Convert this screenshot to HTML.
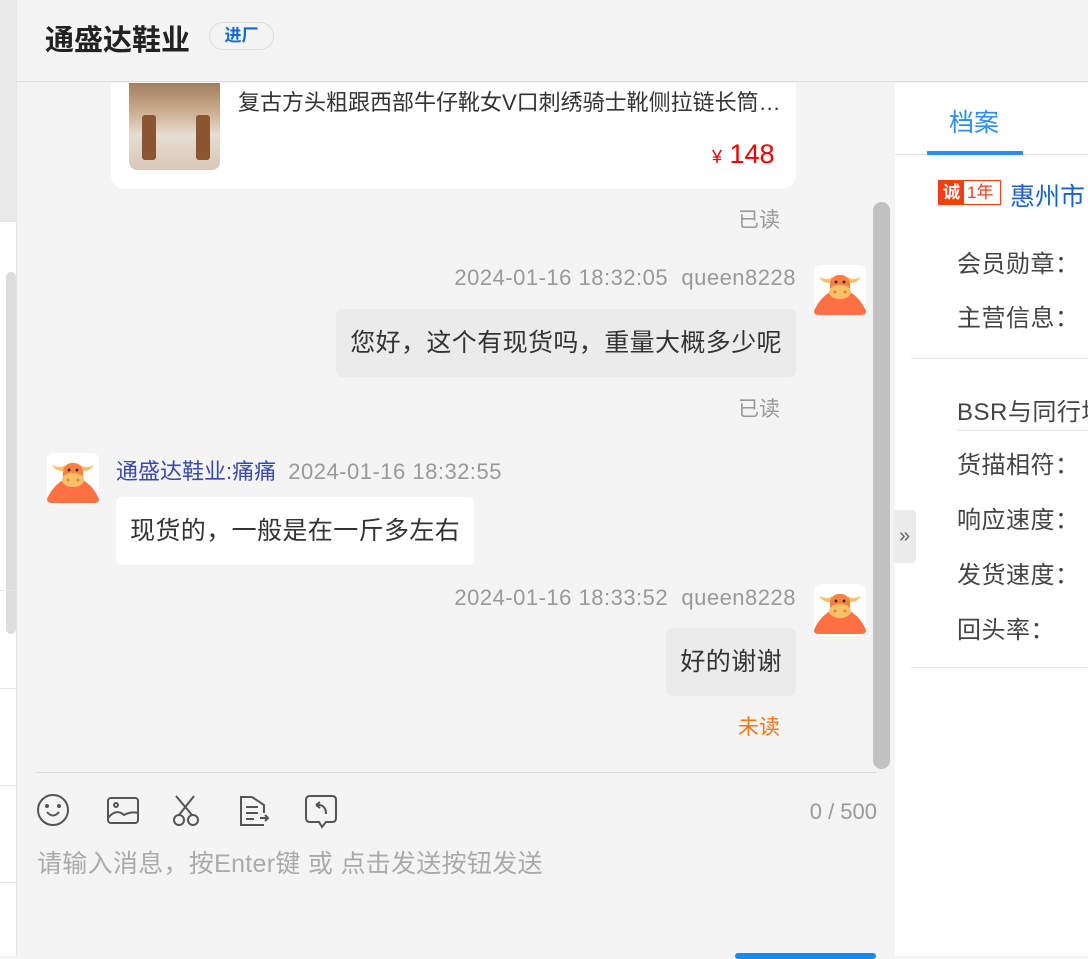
<!DOCTYPE html>
<html><head><meta charset="utf-8"><style>
*{margin:0;padding:0;box-sizing:border-box}
body{width:1088px;height:956px;overflow:hidden;background:#f4f4f4;font-family:"Liberation Sans","Noto Sans CJK SC",sans-serif;position:relative}
.a{position:absolute;white-space:nowrap}
.ts{font-size:22px;color:#999;letter-spacing:0.5px}
.bub{position:absolute;background:#ebebeb;border-radius:6px;font-size:25px;letter-spacing:0.4px;color:#333;padding:0 14px;line-height:68px}
.rd{font-size:21px;color:#999}
.lbl{font-size:24px;letter-spacing:0.5px;color:#444}
</style></head><body>
<!-- left strip -->
<div class="a" style="left:0;top:0;width:17px;height:222px;background:#e8e8e8"></div>
<div class="a" style="left:0;top:222px;width:17px;height:734px;background:#fff;border-right:1px solid #e4e4e4"></div>
<div class="a" style="left:6px;top:272px;width:10px;height:362px;background:#ddd;border-radius:5px"></div>
<div class="a" style="left:0;top:590px;width:17px;height:1px;background:#e6e6e6"></div>
<div class="a" style="left:0;top:688px;width:17px;height:1px;background:#e6e6e6"></div>
<div class="a" style="left:0;top:785px;width:17px;height:1px;background:#e6e6e6"></div>
<div class="a" style="left:0;top:882px;width:17px;height:1px;background:#e6e6e6"></div>
<!-- header -->
<div class="a" style="left:17px;top:0;width:1071px;height:82px;background:#f4f4f4;border-bottom:1px solid #ddd"></div>
<div class="a" style="left:45px;top:17px;font-size:29px;font-weight:bold;color:#222">通盛达鞋业</div>
<div class="a" style="left:209px;top:22px;width:65px;height:28px;border:1px solid #ddd;border-radius:14px;font-size:17px;color:#1768d0;font-weight:bold;text-align:center;line-height:26px">进厂</div>
<!-- product card -->
<div class="a" style="left:111px;top:83px;width:685px;height:106px;background:#fff;border-radius:0 0 14px 14px"></div>
<div class="a" style="left:129px;top:83px;width:91px;height:87px;border-radius:0 0 8px 8px;background:linear-gradient(180deg,#a08060 0%,#c9a88a 30%,#e6ddd2 60%,#d8c8b8 100%)"></div>
<div class="a" style="left:142px;top:115px;width:14px;height:45px;background:#8a5530;border-radius:3px"></div>
<div class="a" style="left:196px;top:115px;width:14px;height:45px;background:#8a5530;border-radius:3px"></div>
<div class="a" style="left:238px;top:85px;font-size:22px;color:#333">复古方头粗跟西部牛仔靴女V口刺绣骑士靴侧拉链长筒…</div>
<div class="a" style="left:712px;top:139px;color:#e00;font-size:27px"><span style="font-size:18px">¥</span> 148</div>
<div class="a rd" style="left:738px;top:204px">已读</div>
<!-- msg1 -->
<div class="a ts" style="right:292px;top:265px">2024-01-16 18:32:05&nbsp;&nbsp;queen8228</div>
<div class="bub" style="right:292px;top:309px;height:68px">您好，这个有现货吗，重量大概多少呢</div>
<div class="a rd" style="left:738px;top:393px">已读</div>
<!-- msg2 -->
<div class="a" style="left:116px;top:454px;font-size:22px;color:#3a4aa8">通盛达鞋业:痛痛 <span style="color:#999;margin-left:6px;letter-spacing:0.5px">2024-01-16 18:32:55</span></div>
<div class="bub" style="left:116px;top:497px;height:68px;background:#fff">现货的，一般是在一斤多左右</div>
<!-- msg3 -->
<div class="a ts" style="right:292px;top:585px">2024-01-16 18:33:52&nbsp;&nbsp;queen8228</div>
<div class="bub" style="right:292px;top:628px;height:68px">好的谢谢</div>
<div class="a rd" style="left:738px;top:711px;color:#f07818">未读</div>
<!-- avatars -->
<svg width="0" height="0" style="position:absolute"><defs><g id="av">
<rect width="52" height="52" rx="7" fill="#fff"/>
<path d="M0 46 Q6 32 18 26 L34 26 Q46 32 52 46 Q52 50 47 50 L5 50 Q0 50 0 46Z" fill="#ff7043"/>
<path d="M5 12 Q14 16 18 12 L18 18 Q9 19 5 12Z M47 12 Q38 16 34 12 L34 18 Q43 19 47 12Z" fill="#f9c06a"/>
<rect x="16" y="10" width="20" height="22" rx="9" fill="#ff8040"/>
<ellipse cx="26" cy="27" rx="11" ry="7" fill="#f9c06a"/>
<circle cx="22" cy="17" r="1.5" fill="#333"/><circle cx="30" cy="17" r="1.5" fill="#333"/>
<circle cx="21" cy="27" r="1.5" fill="#f08030"/><circle cx="31" cy="27" r="1.5" fill="#f08030"/>
</g></defs></svg>
<svg class="a" style="left:814px;top:265px" width="52" height="52"><use href="#av"/></svg>
<svg class="a" style="left:47px;top:453px" width="52" height="52"><use href="#av"/></svg>
<svg class="a" style="left:814px;top:584px" width="52" height="52"><use href="#av"/></svg>
<!-- scrollbar -->
<div class="a" style="left:873px;top:202px;width:17px;height:567px;background:#c1c1c1;border-radius:9px"></div>
<!-- input area -->
<div class="a" style="left:36px;top:772px;width:841px;height:1px;background:#ddd"></div>
<svg class="a" style="left:36px;top:793px" width="310" height="36" fill="none" stroke="#555" stroke-width="2">
<circle cx="17" cy="17" r="15"/><path d="M11 19 Q17 26 23 19"/><circle cx="11" cy="13" r="1" fill="#555"/><circle cx="23" cy="13" r="1" fill="#555"/>
<rect x="72" y="5" width="30" height="25" rx="3"/><circle cx="80" cy="12" r="2"/><path d="M72 25 Q80 15 88 22 Q95 18 102 20"/>
<path d="M140 3 L156 22 M158 3 L143 22"/><circle cx="143" cy="27" r="5"/><circle cx="157" cy="27" r="5"/>
<path d="M216 4 L205 4 L205 32 L228 32 M216 4 L228 12 L228 20 M210 14 L222 14 M210 20 L222 20 M210 26 L218 26 M224 25 L232 25 M229 22 L232 25 L229 28"/>
<path d="M274 3 L296 3 Q300 3 300 7 L300 25 Q300 29 296 29 L290 29 L286 34 L283 29 L274 29 Q270 29 270 25 L270 7 Q270 3 274 3Z M280 12 L284 9 M280 12 L284 15 M280 12 Q290 11 290 21"/>
</svg>
<div class="a" style="right:211px;top:799px;font-size:22px;color:#999">0 / 500</div>
<div class="a" style="left:37px;top:844px;font-size:25px;letter-spacing:0.3px;color:#aaa">请输入消息，按Enter键 或 点击发送按钮发送</div>
<div class="a" style="left:735px;top:953px;width:141px;height:6px;background:#1e88e5;border-radius:4px"></div>
<!-- right panel -->
<div class="a" style="left:895px;top:83px;width:193px;height:873px;background:#fff"></div>
<div class="a" style="left:893px;top:510px;width:23px;height:53px;background:#ececec;border-radius:4px;color:#666;font-size:20px;text-align:center;line-height:52px">»</div>
<div class="a" style="left:949px;top:103px;font-size:25px;color:#2a8ef0">档案</div>
<div class="a" style="left:895px;top:154px;width:193px;height:1px;background:#e6e6e6"></div>
<div class="a" style="left:927px;top:151px;width:96px;height:4px;background:#2a8ef0"></div>
<div class="a" style="left:938px;top:180px;width:63px;height:25px;border:1px solid #f04010;font-size:17px;line-height:23px"><span style="display:inline-block;width:25px;height:23px;background:#f04010;color:#fff;text-align:center;font-weight:bold">诚</span><span style="color:#f04010;padding-left:3px">1年</span></div>
<div class="a" style="left:1010px;top:177px;font-size:25px;color:#1a62c8">惠州市</div>
<div class="a lbl" style="left:957px;top:244px">会员勋章：</div>
<div class="a lbl" style="left:957px;top:298px">主营信息：</div>
<div class="a" style="left:911px;top:358px;width:177px;height:1px;background:#e6e6e6"></div>
<div class="a lbl" style="left:957px;top:392px">BSR与同行均</div>
<div class="a" style="left:957px;top:430px;width:131px;height:1px;background:#e6e6e6"></div>
<div class="a lbl" style="left:957px;top:445px">货描相符：</div>
<div class="a lbl" style="left:957px;top:500px">响应速度：</div>
<div class="a lbl" style="left:957px;top:555px">发货速度：</div>
<div class="a lbl" style="left:957px;top:610px">回头率：</div>
<div class="a" style="left:911px;top:667px;width:177px;height:1px;background:#e6e6e6"></div>
</body></html>
